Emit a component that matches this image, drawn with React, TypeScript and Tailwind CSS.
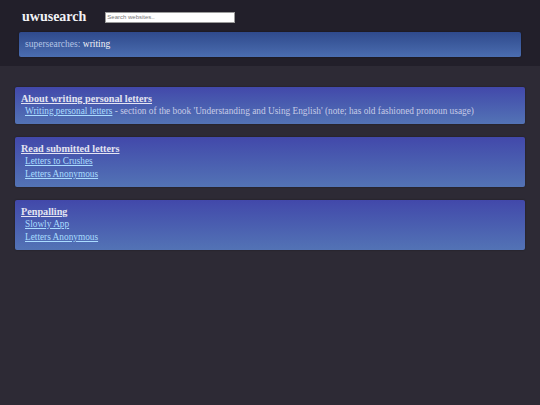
import React from 'react';

type Group = {
  title: string;
  links: { label: string; note?: string }[];
};

const groups: Group[] = [
  {
    title: 'About writing personal letters',
    links: [
      {
        label: 'Writing personal letters',
        note: " - section of the book 'Understanding and Using English' (note; has old fashioned pronoun usage)",
      },
    ],
  },
  {
    title: 'Read submitted letters',
    links: [{ label: 'Letters to Crushes' }, { label: 'Letters Anonymous' }],
  },
  {
    title: 'Penpalling',
    links: [{ label: 'Slowly App' }, { label: 'Letters Anonymous' }],
  },
];

const App: React.FC = () => {
  return (
    <div className="min-h-[405px] bg-[#2d2a35] font-['Liberation_Serif',serif]">
      <header className="bg-[#221f2a] px-[19px] pt-[8px] pb-[9px]">
        <div className="flex items-center gap-[19px] pl-[3px]">
          <h1 className="text-[14px] font-bold text-[#f2f2f5] leading-[18px]">uwusearch</h1>
          <input
            type="text"
            placeholder="Search websites.."
            className="w-[130px] h-[11px] bg-white border border-[#9a9a9a] px-[1px] text-[6px] font-['Liberation_Sans',sans-serif] text-black placeholder:text-[#777] outline-none"
          />
        </div>
        <div className="mt-[6px] h-[25px] rounded-[2px] bg-gradient-to-b from-[#2f4a8c] to-[#4b6db0] flex items-center px-[6px] text-[9.5px] shadow-[0_0_2px_rgba(0,0,0,0.4)]">
          <span className="text-[#b5c4e6]">supersearches:&nbsp;</span>
          <span className="text-[#f4f4f8]">writing</span>
        </div>
      </header>

      <main className="px-[15px] pt-[21px] flex flex-col gap-[13px]">
        {groups.map((g, i) => (
          <section
            key={i}
            className="rounded-[2px] bg-gradient-to-b from-[#4248aa] to-[#5373b5] px-[6px] pt-[5px] pb-[6px] text-[9.3px] leading-[13px] shadow-[0_0_2px_rgba(0,0,0,0.4)]"
          >
            <div className="h-[13px] leading-[13px]">
              <a className="font-bold underline text-[10.2px] text-[#e4e4f2]">{g.title}</a>
            </div>
            {g.links.map((l, j) => (
              <div key={j} className="h-[13px] pl-[4px] text-[#c6cbe6]">
                <a className="underline text-[#a9dcff]">{l.label}</a>
                {l.note}
              </div>
            ))}
          </section>
        ))}
      </main>
    </div>
  );
};

export default App;
